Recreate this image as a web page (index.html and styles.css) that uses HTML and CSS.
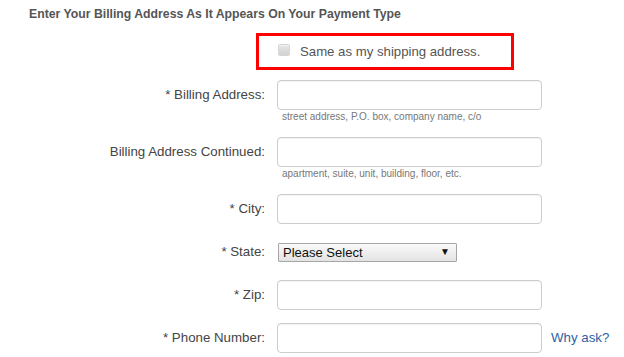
FILE: index.html
```html
<!DOCTYPE html>
<html>
<head>
<meta charset="utf-8">
<link rel="stylesheet" href="styles.css">
</head>
<body>
<div class="page">
  <h2 class="heading">Enter Your Billing Address As It Appears On Your Payment Type</h2>
  <div class="same-box">
    <span class="checkbox"></span>
    <span class="same-text">Same as my shipping address.</span>
  </div>
  <div class="form">
    <div class="row">
      <label class="label">* Billing Address:</label>
      <div class="field">
        <div class="input"></div>
        <div class="help">street address, P.O. box, company name, c/o</div>
      </div>
    </div>
    <div class="row">
      <label class="label">Billing Address Continued:</label>
      <div class="field">
        <div class="input"></div>
        <div class="help">apartment, suite, unit, building, floor, etc.</div>
      </div>
    </div>
    <div class="row">
      <label class="label">* City:</label>
      <div class="field"><div class="input"></div></div>
    </div>
    <div class="row">
      <label class="label">* State:</label>
      <div class="field select-field">
        <div class="select">
          <span class="select-text">Please Select</span>
          <span class="arrow">&#9660;</span>
        </div>
      </div>
    </div>
    <div class="row">
      <label class="label">* Zip:</label>
      <div class="field"><div class="input"></div></div>
    </div>
    <div class="row">
      <label class="label">* Phone Number:</label>
      <div class="field"><div class="input"></div></div>
      <a class="why">Why ask?</a>
    </div>
  </div>
</div>
</body>
</html>
```

FILE: styles.css
```css
html, body {
  margin: 0;
  padding: 0;
  background: #fff;
}
body {
  font-family: "Liberation Sans", Arial, sans-serif;
  color: #444;
}
.heading {
  margin: 0;
  padding: 7px 0 0 29px;
  font-size: 12.25px;
  line-height: 15px;
  font-weight: bold;
  color: #555;
}
.same-box {
  margin: 11px 0 0 256px;
  width: 252px;
  height: 31px;
  border: 3px solid #f00;
  display: flex;
  align-items: center;
  box-sizing: content-box;
}
.checkbox {
  width: 10px;
  height: 10px;
  margin-left: 19px;
  margin-top: -3px;
  border: 1px solid #d4d4d4;
  border-radius: 2px;
  background: linear-gradient(#e6e6e6, #d2d2d2);
  box-shadow: inset 0 1px 1px rgba(255,255,255,0.6);
}
.same-text {
  margin-left: 10px;
  font-size: 13.2px;
  color: #555;
}
.form {
  margin-top: 10px;
  display: flex;
  flex-direction: column;
  gap: 13px;
}
.row {
  display: flex;
  align-items: flex-start;
}
.label {
  width: 265px;
  text-align: right;
  font-size: 13.3px;
  line-height: 30px;
  color: #444;
}
.field {
  margin-left: 12px;
}
.input {
  width: 263px;
  height: 28px;
  border: 1px solid #ccc;
  border-radius: 4px;
  box-shadow: inset 0 1px 1px rgba(0,0,0,0.05);
  background: #fff;
}
.help {
  height: 14px;
  line-height: 14px;
  padding-left: 5px;
  font-size: 10px;
  color: #777;
}
.select-field {
  height: 30px;
  display: flex;
  align-items: center;
  margin-left: 13px;
}
.select {
  position: relative;
  width: 177px;
  height: 17px;
  border: 1px solid #a6a6a6;
  border-radius: 1px;
  background: linear-gradient(#fafafa, #e3e3e3);
  display: flex;
  align-items: center;
}
.select-text {
  padding-left: 4px;
  font-size: 13px;
  color: #111;
}
.arrow {
  position: absolute;
  right: 6px;
  top: 2px;
  font-size: 10px;
  color: #111;
}
.why {
  margin-left: 9px;
  font-size: 13.3px;
  line-height: 30px;
  color: #2f5fa6;
}
```
